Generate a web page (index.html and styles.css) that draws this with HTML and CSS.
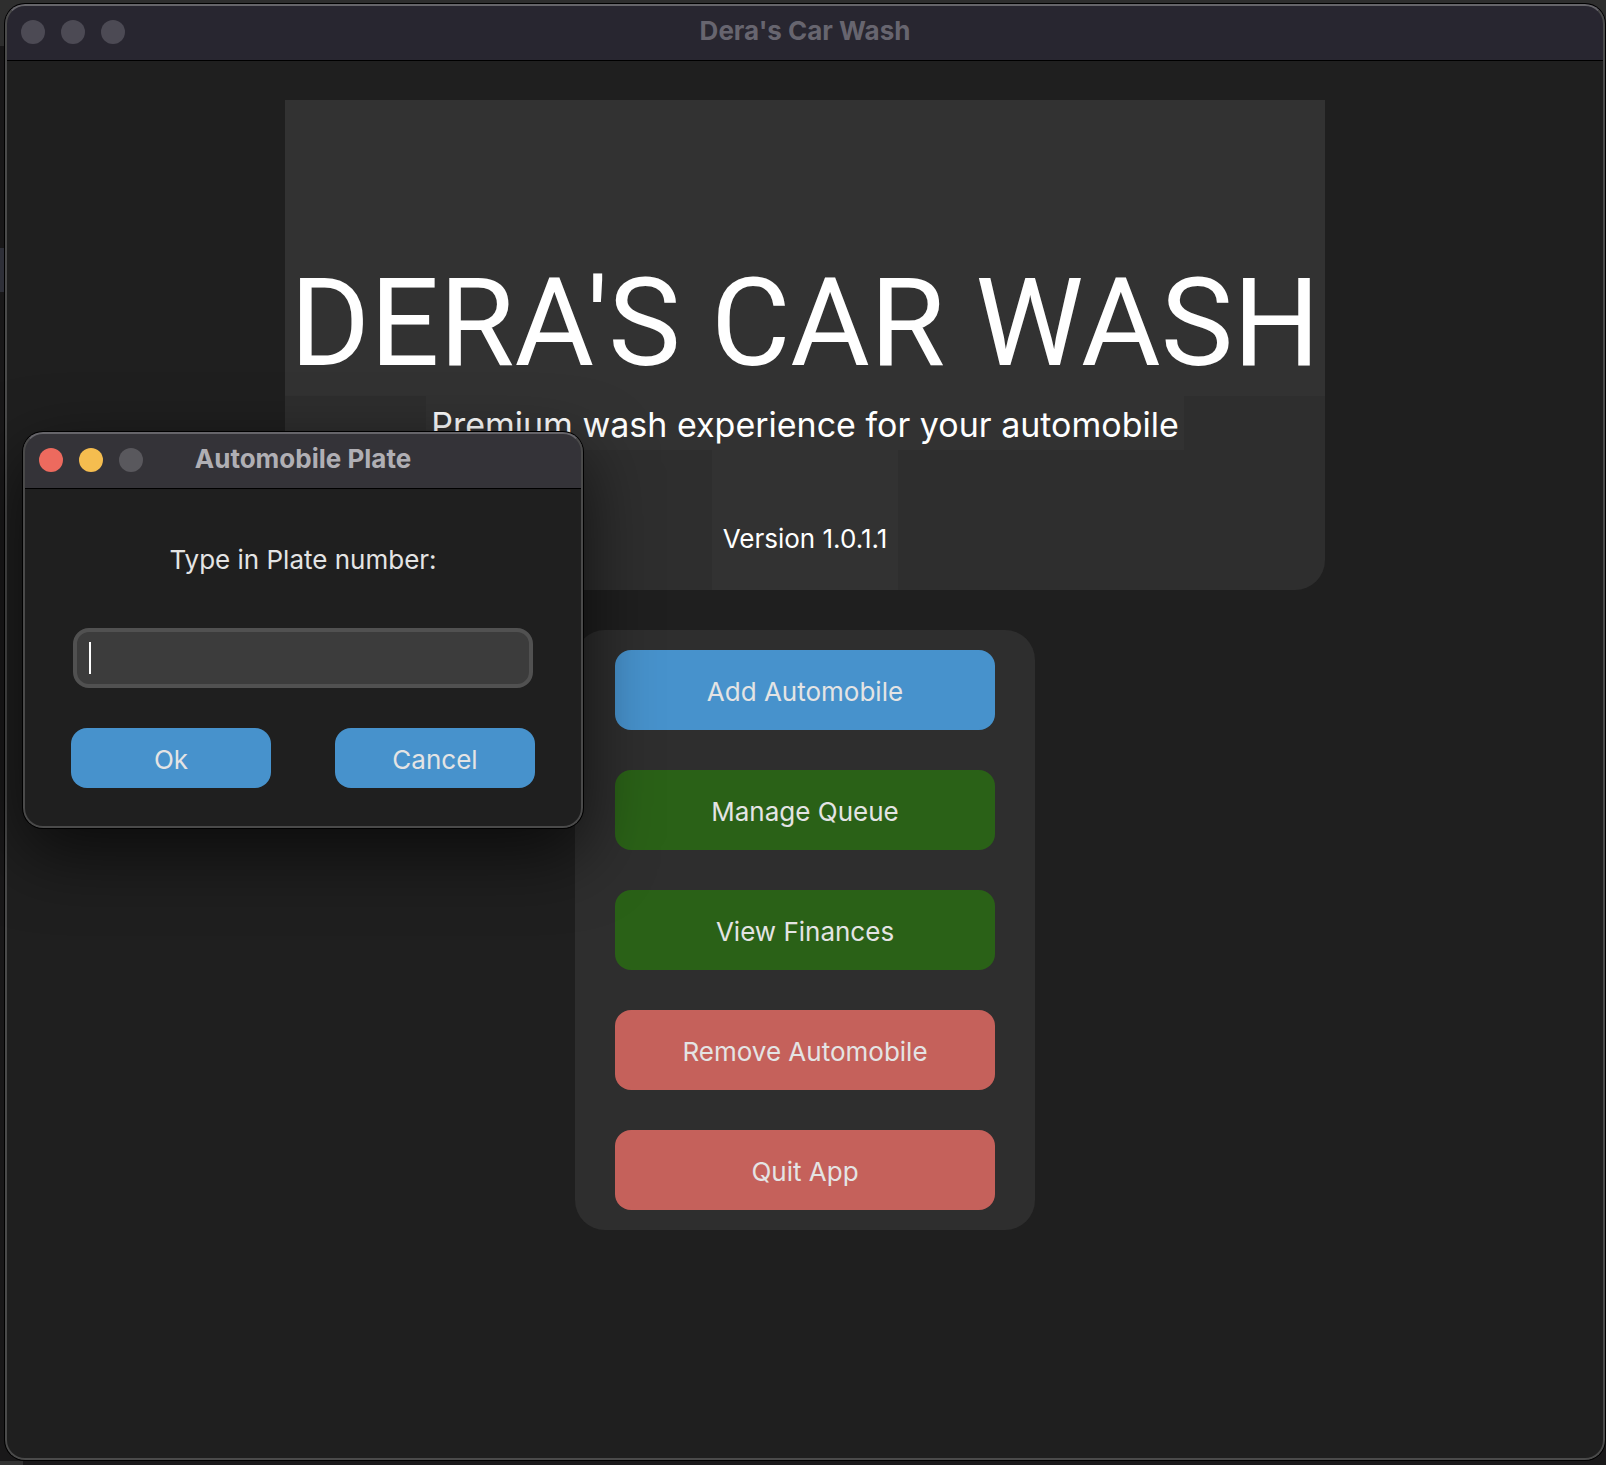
FILE: index.html
```
<!DOCTYPE html>
<html lang="en">
<head>
<meta charset="utf-8">
<meta name="viewport" content="width=device-width, initial-scale=1">
<title>Dera's Car Wash</title>
<link rel="stylesheet" href="styles.css">
</head>
<body class="desktop">
<div class="window window-main">
  <header class="titlebar">
    <div class="lights"><span class="light"></span><span class="light"></span><span class="light"></span></div>
    <h2 class="titlebar-text">Dera's Car Wash</h2>
  </header>
  <main class="content">
    <section class="hero">
      <h1 class="hero-title">DERA'S CAR WASH</h1>
      <p class="hero-tagline">Premium wash experience for your automobile</p>
      <p class="hero-version">Version 1.0.1.1</p>
    </section>
    <nav class="menu">
      <button class="button menu-button" type="button">Add Automobile</button>
      <button class="button menu-button green" type="button">Manage Queue</button>
      <button class="button menu-button green" type="button">View Finances</button>
      <button class="button menu-button red" type="button">Remove Automobile</button>
      <button class="button menu-button red" type="button">Quit App</button>
    </nav>
  </main>
</div>
<div class="window dialog" role="dialog" aria-labelledby="dialog-title">
  <header class="titlebar">
    <div class="lights"><span class="light close"></span><span class="light minimize"></span><span class="light"></span></div>
    <h2 class="titlebar-text" id="dialog-title">Automobile Plate</h2>
  </header>
  <form class="plate-form">
    <label class="plate-label" for="plate">Type in Plate number:</label>
    <div class="plate-field">
      <input class="plate-input" id="plate" type="text" autocomplete="off">
      <span class="caret"></span>
    </div>
    <div class="plate-actions">
      <button class="button" type="button">Ok</button>
      <button class="button" type="button">Cancel</button>
    </div>
  </form>
</div>
</body>
</html>
```

FILE: styles.css
```
* { box-sizing: border-box; }

.desktop {
  margin: 0;
  min-height: 100vh;
  padding: 4px 1px 5px 5px;
  display: flex;
  position: relative;
  font-family: Inter, "Liberation Sans", sans-serif;
  font-size: 26px;
  line-height: 32px;
  color: #e4e4e4;
  background:
    linear-gradient(#2e2f38, #2e2f38) 0 248px / 5px 44px no-repeat,
    linear-gradient(#323232, #323232) 0 100% / 23px 4px no-repeat,
    linear-gradient(#2e2e2e, #2e2e2e) 0 0 / 100% 46px no-repeat,
    #191819;
}

h1, h2, p { margin: 0; font-weight: 400; }

.window {
  position: relative;
  display: flex;
  flex-direction: column;
  border-radius: 20px;
  background: #1f1f1f;
  overflow: hidden;
  box-shadow: 0 0 0 1px #000;
}

/* Light rim drawn over the title bar and the content */
.window::after {
  content: "";
  position: absolute;
  inset: 0;
  border: 2px solid #4a4a4a;
  border-top-color: #66656a;
  border-radius: inherit;
  pointer-events: none;
}

.window-main { flex: 1; }

.titlebar {
  display: grid;
  grid-template-columns: 1fr auto 1fr;
  align-items: center;
  height: 57px;
  padding: 0 16px;
  background: #282630;
  border-bottom: 1px solid #000;
}

.titlebar-text {
  font-size: 26px;
  line-height: 32px;
  font-weight: 700;
  color: #67656f;
  padding-bottom: 2px;
}

.lights { display: flex; gap: 16px; }
.light { width: 24px; height: 24px; border-radius: 50%; background: #4c4a54; }
.close { background: #ed6a5e; }
.minimize { background: #f5bd4f; }

.content {
  display: flex;
  flex-direction: column;
  align-items: center;
  gap: 40px;
  padding: 39px 40px;
}

.hero {
  width: 1040px;
  max-width: 100%;
  height: 490px;
  display: flex;
  flex-direction: column;
  align-items: center;
  background: #2e2e2e;
  border-radius: 0 0 30px 30px;
  color: #fff;
  text-align: center;
  white-space: nowrap;
}

.hero-title {
  align-self: stretch;
  height: 296px;
  padding-top: 151px;
  font-family: Roboto, Inter, sans-serif;
  font-size: 122px;
  line-height: 146px;
  background: #323232;
}

.hero-tagline {
  width: 758px;
  height: 54px;
  font-size: 34px;
  line-height: 58px;
  background: #323232;
}

.hero-version {
  width: 186px;
  flex: 1;
  padding-top: 73px;
  background: #323232;
}

.menu {
  display: flex;
  flex-direction: column;
  gap: 40px;
  width: 460px;
  padding: 20px 40px;
  border-radius: 30px;
  background: #2e2e2e;
}

.button {
  height: 60px;
  padding: 4px 0 0;
  border: 0;
  border-radius: 16px;
  background: #4792cc;
  color: #e4e4e4;
  font: inherit;
}
.menu-button { height: 80px; }
.green { background: #2a6117; }
.red { background: #c5615b; }

.dialog {
  position: absolute;
  left: 23px;
  top: 432px;
  width: 560px;
  height: 396px;
  box-shadow: 0 0 0 1px #000, 0 24px 70px rgba(0, 0, 0, 0.65);
}
.dialog .titlebar { background: #343338; }
.dialog .titlebar-text { color: #b0afb4; }
.dialog .light:last-child { background: #59585d; }

.plate-form {
  display: flex;
  flex-direction: column;
  align-items: center;
  gap: 40px;
  padding: 55px 48px 38px;
}
.plate-label { margin-bottom: 12px; }
.plate-field { position: relative; width: 460px; height: 60px; }
.plate-input {
  display: block;
  width: 100%;
  height: 100%;
  padding: 0 12px;
  border: 4px solid #515151;
  border-radius: 16px;
  background: #3c3c3c;
  color: #e4e4e4;
  font: inherit;
  outline: 0;
}
.caret {
  position: absolute;
  left: 16px;
  top: 14px;
  width: 2px;
  height: 32px;
  background: #fff;
}
.plate-actions { display: flex; gap: 64px; }
.plate-actions .button { width: 200px; }
```
